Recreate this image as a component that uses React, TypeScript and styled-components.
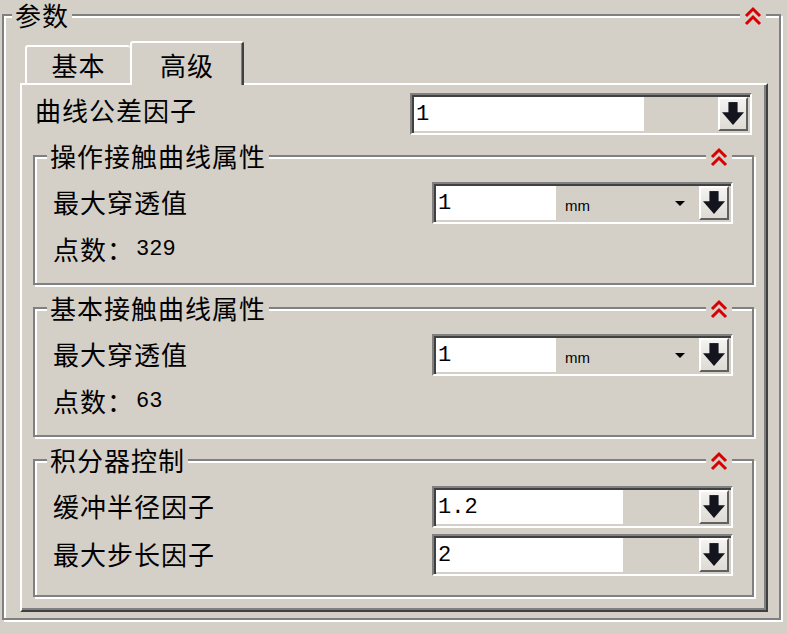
import styled, { createGlobalStyle } from "styled-components";

const CJK = `"Noto Sans CJK SC", "Noto Sans", sans-serif`;
const MONO = `"Liberation Mono", "DejaVu Sans Mono", monospace`;

const GlobalStyle = createGlobalStyle`
  html, body {
    margin: 0;
    padding: 0;
    background: #d4d0c8;
  }
  body {
    font-family: ${CJK};
    color: #000;
  }
`;

const Screen = styled.div`
  box-sizing: border-box;
  width: 787px;
  height: 634px;
  overflow: hidden;
  padding: 14px 0 0 2px;
  background: #d4d0c8;
`;

// etched frame: grey line with a white line just below / right of it
const Group = styled.div<{ $pad: string; $w?: number; $h?: number }>`
  position: relative;
  box-sizing: border-box;
  width: ${(p) => (p.$w ? `${p.$w}px` : "auto")};
  height: ${(p) => (p.$h ? `${p.$h}px` : "auto")};
  border: 2px solid #808080;
  box-shadow: inset 2px 2px 0 #fff, 2px 2px 0 #fff;
  padding: ${(p) => p.$pad};
  display: flex;
  flex-direction: column;
`;

const Caption = styled.div<{ $top: number; $left: number }>`
  position: absolute;
  top: ${(p) => p.$top}px;
  left: ${(p) => p.$left}px;
  padding: 0 3px;
  background: #d4d0c8;
  font-size: 26px;
  line-height: 26px;
  letter-spacing: 1px;
  white-space: nowrap;
`;

const Collapse = styled.div<{ $top: number; $right: number }>`
  position: absolute;
  top: ${(p) => p.$top}px;
  right: ${(p) => p.$right}px;
  width: 26px;
  display: flex;
  justify-content: center;
  background: #d4d0c8;
`;

const TabStrip = styled.div`
  display: flex;
  align-items: flex-end;
  height: 42px;
  padding-left: 5px;
`;

const Tab = styled.div<{ $active?: boolean; $w: number }>`
  position: relative;
  z-index: ${(p) => (p.$active ? 1 : 0)};
  box-sizing: border-box;
  width: ${(p) => p.$w}px;
  height: ${(p) => (p.$active ? 44 : 38)}px;
  margin-bottom: ${(p) => (p.$active ? -2 : 0)}px;
  padding-top: ${(p) => (p.$active ? 9 : 5)}px;
  background: #d4d0c8;
  border-top: 2px solid #fff;
  border-left: 2px solid #fff;
  border-right: ${(p) => (p.$active ? "2px solid #404040" : "none")};
  box-shadow: ${(p) => (p.$active ? "inset -1px 0 0 #808080" : "none")};
  border-radius: 3px 3px 0 0;
  text-align: center;
  font-size: 26px;
  line-height: 26px;
  letter-spacing: 1px;
`;

const TabPanel = styled.div`
  box-sizing: border-box;
  height: 529px;
  border: 2px solid;
  border-color: #fff #404040 #404040 #fff;
  box-shadow: inset -2px -2px 0 #808080;
  padding: 8px 12px 13px 11px;
  display: flex;
  flex-direction: column;
`;

const FieldRow = styled.div<{ $inset?: number; $lift?: number }>`
  display: flex;
  align-items: center;
  justify-content: space-between;
  height: 42px;
  padding: 0 ${(p) => p.$inset ?? 0}px;

  & > span {
    margin-bottom: ${(p) => p.$lift ?? 4}px;
  }
`;

const Label = styled.span`
  font-size: 26px;
  line-height: 26px;
  letter-spacing: 1px;
  white-space: nowrap;
`;

const InfoRow = styled.div`
  display: flex;
  align-items: center;
  height: 50px;
`;

const Digits = styled.span`
  font-family: ${MONO};
  font-size: 22px;
  margin-left: 2px;
`;

const Spin = styled.div<{ $w: number }>`
  box-sizing: border-box;
  width: ${(p) => p.$w}px;
  height: 42px;
  display: flex;
  padding: 2px;
  border: 2px solid;
  border-color: #808080 #fff #fff #808080;
  box-shadow: inset 2px 2px 0 #404040, inset -2px -2px 0 #d4d0c8;
  background: #d4d0c8;
`;

const Entry = styled.div<{ $w: number }>`
  width: ${(p) => p.$w}px;
  background: #fff;
  display: flex;
  align-items: center;
  padding-left: 2px;
  font-family: ${MONO};
  font-size: 22px;
`;

const Unit = styled.div`
  flex: 1;
  display: flex;
  align-items: center;
  justify-content: space-between;
  padding: 4px 14px 0 9px;
  font-family: "Liberation Sans", Arial, sans-serif;
  font-size: 15px;
`;

const Caret = styled.span`
  width: 0;
  height: 0;
  margin-top: -4px;
  border-left: 5px solid transparent;
  border-right: 5px solid transparent;
  border-top: 5px solid #000;
`;

const Filler = styled.div`
  flex: 1;
`;

const StepButton = styled.div`
  box-sizing: border-box;
  width: 30px;
  display: flex;
  align-items: center;
  justify-content: center;
  background: linear-gradient(#f4f3f0, #dedbd4);
  border-top: 2px solid #fff;
  border-left: 2px solid #fff;
  border-right: 2px solid #606060;
  border-bottom: 2px solid #606060;
`;

const DownArrow = () => (
  <svg width="22" height="24" viewBox="0 0 24 26">
    <rect x="7" y="0" width="10" height="12" fill="#14141e" />
    <polygon points="0,11 24,11 12,25" fill="#14141e" />
  </svg>
);

const DoubleUp = () => (
  <svg width="20" height="21" viewBox="0 0 20 21">
    <polyline points="3,10 10,3 17,10" fill="none" stroke="#d80000" strokeWidth="3" />
    <polyline points="3,18 10,11 17,18" fill="none" stroke="#d80000" strokeWidth="3" />
  </svg>
);

type SpinProps = {
  width: number;
  entry: number;
  value: string;
  unit?: string;
};

const SpinField = ({ width, entry, value, unit }: SpinProps) => (
  <Spin $w={width}>
    <Entry $w={entry}>{value}</Entry>
    {unit ? (
      <Unit>
        {unit}
        <Caret />
      </Unit>
    ) : (
      <Filler />
    )}
    <StepButton>
      <DownArrow />
    </StepButton>
  </Spin>
);

type Section = {
  title: string;
  gap: number;
  pb: number;
  rows: { label: string; value: string; unit?: string; entry: number }[];
  count?: string;
};

const sections: Section[] = [
  {
    title: "操作接触曲线属性",
    gap: 20,
    pb: 9,
    rows: [{ label: "最大穿透值", value: "1", unit: "mm", entry: 118 }],
    count: "329",
  },
  {
    title: "基本接触曲线属性",
    gap: 22,
    pb: 9,
    rows: [{ label: "最大穿透值", value: "1", unit: "mm", entry: 118 }],
    count: "63",
  },
  {
    title: "积分器控制",
    gap: 22,
    pb: 19,
    rows: [
      { label: "缓冲半径因子", value: "1.2", entry: 185 },
      { label: "最大步长因子", value: "2", entry: 185 },
    ],
  },
];

const RowStack = styled.div`
  display: flex;
  flex-direction: column;
  gap: 6px;
`;

const Spacer = styled.div<{ $h: number }>`
  height: ${(p) => p.$h}px;
  flex: none;
`;

const App = () => {
  return (
    <Screen>
      <GlobalStyle />
      <Group $pad="25px 11px 6px 16px" $w={779} $h={606}>
        <Caption $top={-14} $left={8}>参数</Caption>
        <Collapse $top={-10} $right={13}>
          <DoubleUp />
        </Collapse>

        <TabStrip>
          <Tab $w={105}>基本</Tab>
          <Tab $w={114} $active>
            高级
          </Tab>
        </TabStrip>

        <TabPanel>
          <FieldRow $inset={2} $lift={8}>
            <Label>曲线公差因子</Label>
            <SpinField width={342} entry={228} value="1" />
          </FieldRow>

          {sections.map((s) => (
            <div key={s.title}>
              <Spacer $h={s.gap} />
              <Group $pad={`25px 19px ${s.pb}px 18px`}>
                <Caption $top={-14} $left={12}>
                  {s.title}
                </Caption>
                <Collapse $top={-10} $right={20}>
                  <DoubleUp />
                </Collapse>
                <RowStack>
                  {s.rows.map((r) => (
                    <FieldRow key={r.label} $lift={3}>
                      <Label>{r.label}</Label>
                      <SpinField width={301} entry={r.entry} value={r.value} unit={r.unit} />
                    </FieldRow>
                  ))}
                </RowStack>
                {s.count && (
                  <InfoRow>
                    <Label>点数：</Label>
                    <Digits>{s.count}</Digits>
                  </InfoRow>
                )}
              </Group>
            </div>
          ))}
        </TabPanel>
      </Group>
    </Screen>
  );
};

export default App;
